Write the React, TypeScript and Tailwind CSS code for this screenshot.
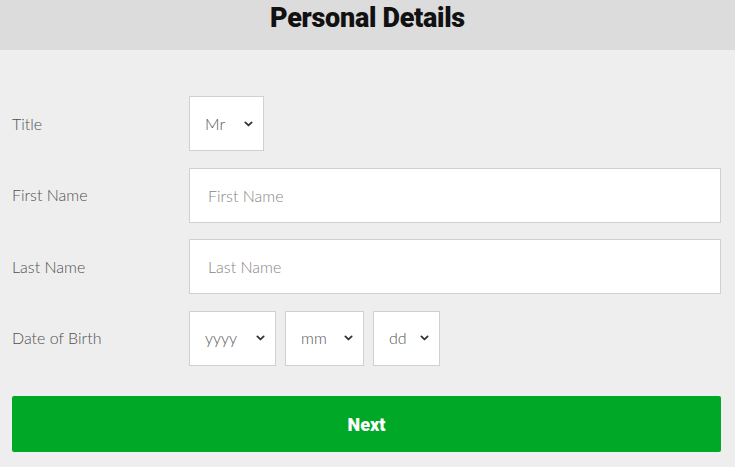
import React from "react";

function Chevron() {
  return (
    <svg
      viewBox="0 0 10 6"
      className="pointer-events-none absolute top-1/2 right-0 h-[6px] w-[9px] -translate-y-1/2"
      fill="none"
      stroke="#333"
      strokeWidth={2}
      strokeLinecap="round"
      strokeLinejoin="round"
    >
      <path d="M1.5 1.2 5 4.6 8.5 1.2" />
    </svg>
  );
}

function Select({ value, width }: { value: string; width: string }) {
  return (
    <div className={`relative h-[55px] border border-[#d0d0d0] bg-white ${width}`}>
      <select
        defaultValue={value}
        className="h-full w-full appearance-none bg-transparent pl-[15px] text-[16px] font-light text-[#555] outline-none"
      >
        <option>{value}</option>
      </select>
      <div className="pointer-events-none absolute top-0 right-[10px] bottom-0 w-[9px]">
        <Chevron />
      </div>
    </div>
  );
}

function Row({ label, children }: { label: string; children: React.ReactNode }) {
  return (
    <div className="flex items-center">
      <div className="w-[177px] text-[16px] font-light text-[#505050]">{label}</div>
      <div className="flex flex-1 gap-[9px]">{children}</div>
    </div>
  );
}

function TextInput({ placeholder }: { placeholder: string }) {
  return (
    <input
      placeholder={placeholder}
      className="h-[55px] w-full border border-[#d0d0d0] bg-white px-[18px] text-[16px] font-light text-[#555] outline-none placeholder:text-[#858585]"
    />
  );
}

export default function App() {
  return (
    <div className="min-h-[467px] bg-[#eeeeee]" style={{ fontFamily: "Lato, 'Open Sans', sans-serif" }}>
      <header className="flex h-[50px] items-center justify-center bg-[#dcdcdc]">
        <h1
          className="pb-[14px] text-[27px] leading-[36px] font-black tracking-[-0.3px] text-[#111]"
          style={{ fontFamily: "Roboto, sans-serif" }}
        >
          Personal Details
        </h1>
      </header>
      <form className="flex flex-col gap-[16.6px] pt-[46px] pl-[12px] pr-[14px]">
        <Row label="Title">
          <Select value="Mr" width="w-[75px]" />
        </Row>
        <Row label="First Name">
          <TextInput placeholder="First Name" />
        </Row>
        <Row label="Last Name">
          <TextInput placeholder="Last Name" />
        </Row>
        <Row label="Date of Birth">
          <Select value="yyyy" width="w-[87px]" />
          <Select value="mm" width="w-[79px]" />
          <Select value="dd" width="w-[67px]" />
        </Row>
        <button
          type="button"
          className="mt-[14px] h-[56px] w-full rounded-[2px] bg-[#00a828] text-[18px] font-black text-white"
          style={{ fontFamily: "Roboto, sans-serif" }}
        >
          Next
        </button>
      </form>
    </div>
  );
}
